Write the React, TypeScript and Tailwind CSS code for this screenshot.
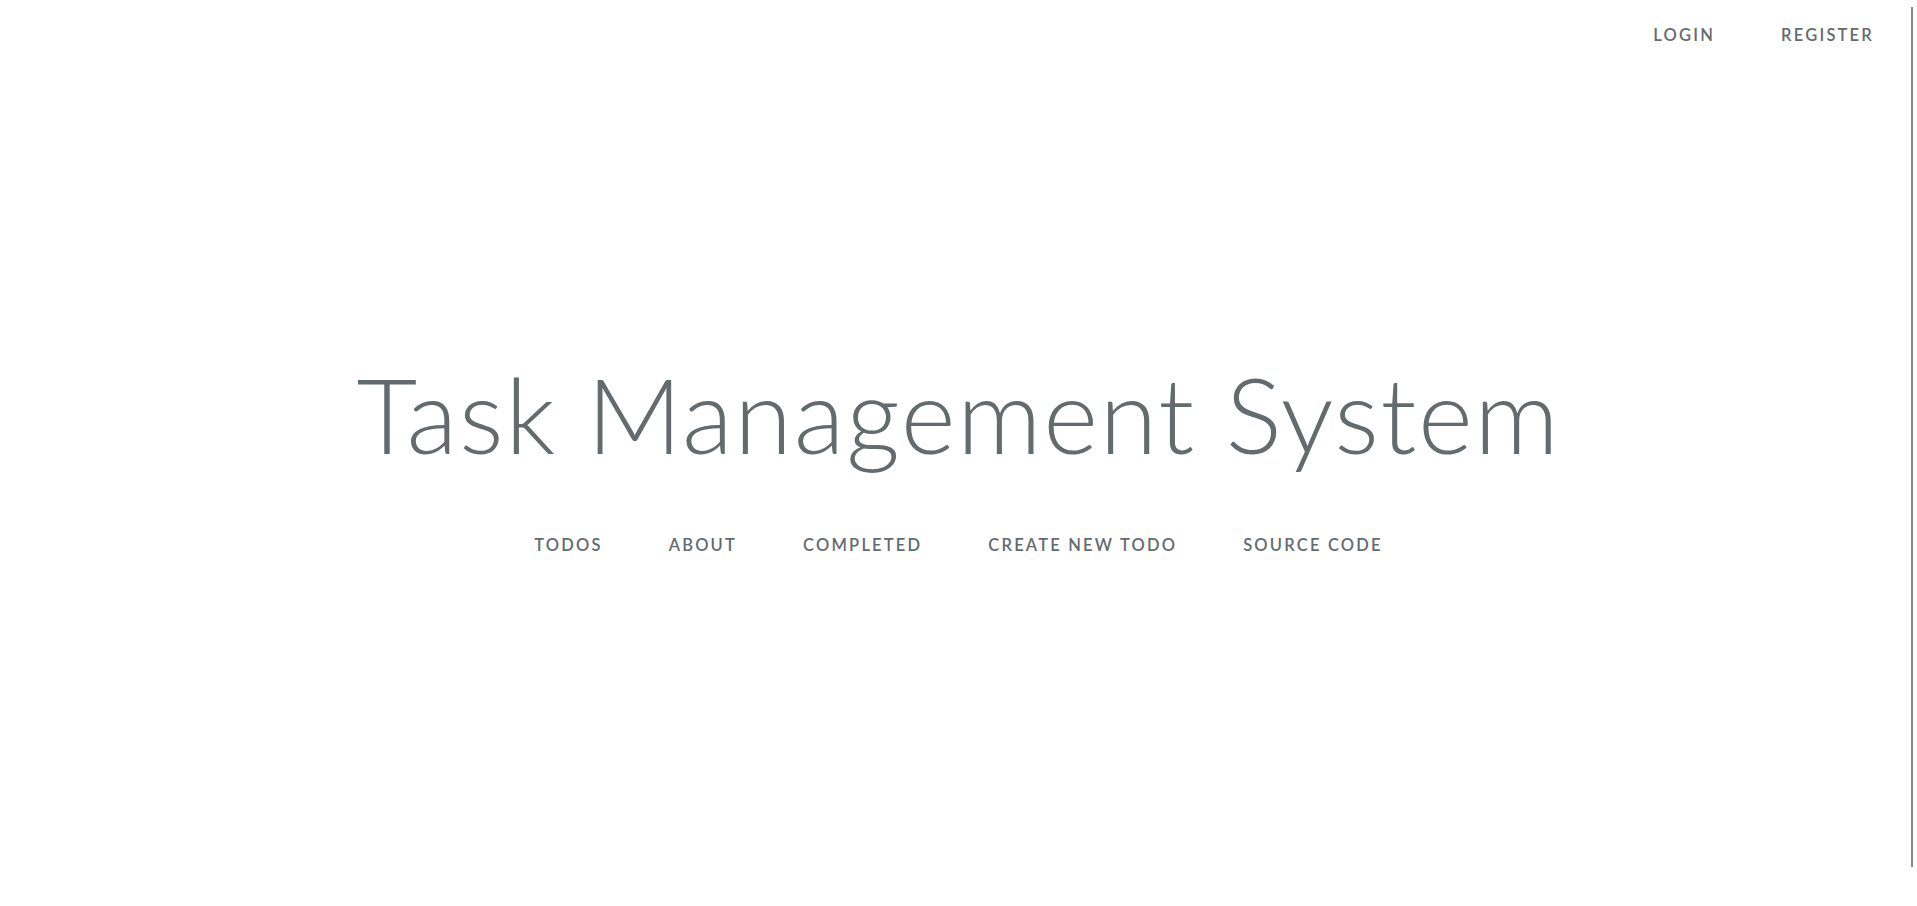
const navLinks = ['Todos', 'About', 'Completed', 'Create New Todo', 'Source Code']

export default function App() {
  return (
    <div
      className="relative h-[906px] w-full overflow-hidden bg-white text-[#636b6f]"
      style={{ fontFamily: 'Lato, "Noto Sans", sans-serif' }}
    >
      <div className="absolute right-[10px] top-[23px] flex">
        <a href="#" className="px-[33px] text-[16.5px] font-semibold uppercase tracking-[2.2px] leading-[24px]">
          Login
        </a>
        <a href="#" className="px-[33px] text-[16.5px] font-semibold uppercase tracking-[2.2px] leading-[24px]">
          Register
        </a>
      </div>

      <div className="flex h-full flex-col items-center justify-center pt-[8px]">
        <h1 className="text-[105px] font-light leading-none tracking-[1.6px]">Task Management System</h1>
        <div className="mt-[71px] flex">
          {navLinks.map(link => (
            <a
              key={link}
              href="#"
              className="px-[33px] text-[16.5px] font-semibold uppercase tracking-[2.2px] leading-none"
            >
              {link}
            </a>
          ))}
        </div>
      </div>

      {/* scrollbar-ish edge line */}
      <div className="absolute right-[4px] top-[7px] h-[860px] w-[2px] bg-[#8a8a8a]" />
    </div>
  )
}
